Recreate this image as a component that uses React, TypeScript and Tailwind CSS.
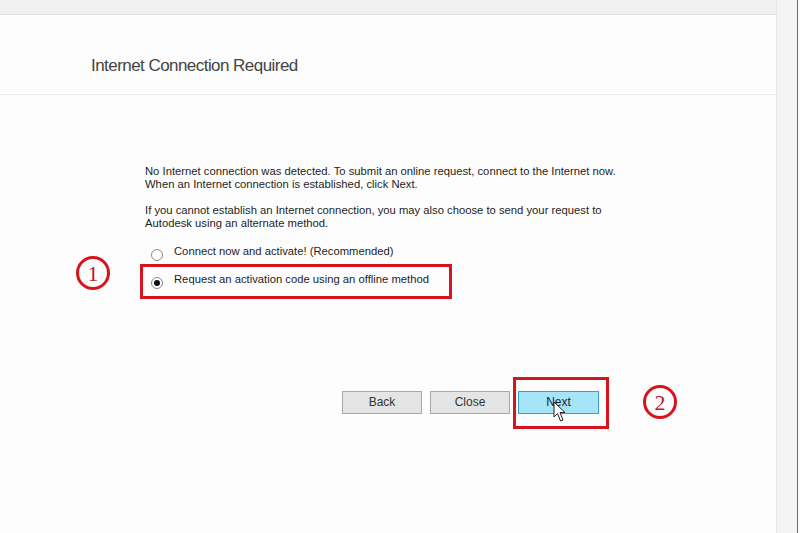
export default function App() {
  return (
    <div className="relative flex h-[533px] w-[800px] overflow-hidden bg-white font-['Liberation_Sans',Arial,sans-serif]">
      <div className="flex w-[776px] flex-col">
        <div className="h-[15px] border-b border-[#e2e2e2] bg-[#f1f1f1]" />
        <div className="h-[80px] border-b border-[#eeeeee] bg-[#fdfdfd] pl-[91px] pt-[41px]">
          <h1 className="text-[17px] leading-[20px] tracking-[-0.55px] text-[#444]">
            Internet Connection Required
          </h1>
        </div>
        <div className="flex flex-1 flex-col bg-[#fdfdfd] pl-[145px] pt-[70px] text-[11.25px] leading-[13px] text-[#1e1e1e]">
          <p>
            No Internet connection was detected. To submit an online request, connect to the Internet now.
            <br />
            When an Internet connection is established, click Next.
          </p>
          <p className="mt-[13px]">
            If you cannot establish an Internet connection, you may also choose to send your request to
            <br />
            Autodesk using an alternate method.
          </p>
          <div className="mt-[15px] flex flex-col gap-[12px]">
            <label className="flex items-start gap-[11px] pl-[6px]">
              <span className="mt-[4px] h-[12px] w-[12px] rounded-full border border-[#8a8a8a] bg-white" />
              <span>Connect now and activate! (Recommended)</span>
            </label>
            <label className="flex items-start gap-[11px] pl-[6px]">
              <span className="mt-[4px] flex h-[12px] w-[12px] items-center justify-center rounded-full border border-[#8a8a8a] bg-white">
                <span className="h-[6px] w-[6px] rounded-full bg-[#111]" />
              </span>
              <span>Request an activation code using an offline method</span>
            </label>
          </div>
          <div className="mt-[102px] flex gap-[8px] pl-[197px]">
            <button className="h-[23px] w-[80px] border border-[#a9a9a9] bg-[#e5e5e5] text-[12px] text-[#333]">Back</button>
            <button className="h-[23px] w-[80px] border border-[#a9a9a9] bg-[#e5e5e5] text-[12px] text-[#333]">Close</button>
            <button className="h-[23px] w-[81px] border border-[#3a9fd0] bg-[#a6e4f8] text-[12px] text-[#1a2030]">Next</button>
          </div>
        </div>
      </div>
      <div className="w-[21px] border-l border-[#e6e6e6] bg-[#f4f4f4]" />
      <div className="w-[1px] bg-[#6b6b6b]" />
      <div className="w-[2px] bg-[#fafafa]" />

      {/* annotations */}
      <div className="absolute left-[140px] top-[264px] h-[35px] w-[312px] border-[3px] border-[#d7141c]" />
      <div className="absolute left-[513px] top-[377px] h-[52px] w-[96px] border-[3px] border-[#d7141c]" />
      <div className="absolute left-[76px] top-[256px] flex h-[34px] w-[34px] items-center justify-center rounded-full border-[3px] border-[#d7141c] font-['Liberation_Serif',serif] text-[22px] text-[#c8141c]">
        1
      </div>
      <div className="absolute left-[643px] top-[385px] flex h-[34px] w-[34px] items-center justify-center rounded-full border-[3px] border-[#d7141c] font-['Liberation_Serif',serif] text-[22px] text-[#c8141c]">
        2
      </div>
      <svg className="absolute left-[553px] top-[401px]" width="14" height="22" viewBox="0 0 14 22">
        <path
          d="M1 1 L1 16 L4.5 12.5 L7.5 20 L10 19 L7 11.5 L12 11.5 Z"
          fill="white"
          stroke="#222"
          strokeWidth="1"
          strokeLinejoin="round"
        />
      </svg>
    </div>
  );
}
